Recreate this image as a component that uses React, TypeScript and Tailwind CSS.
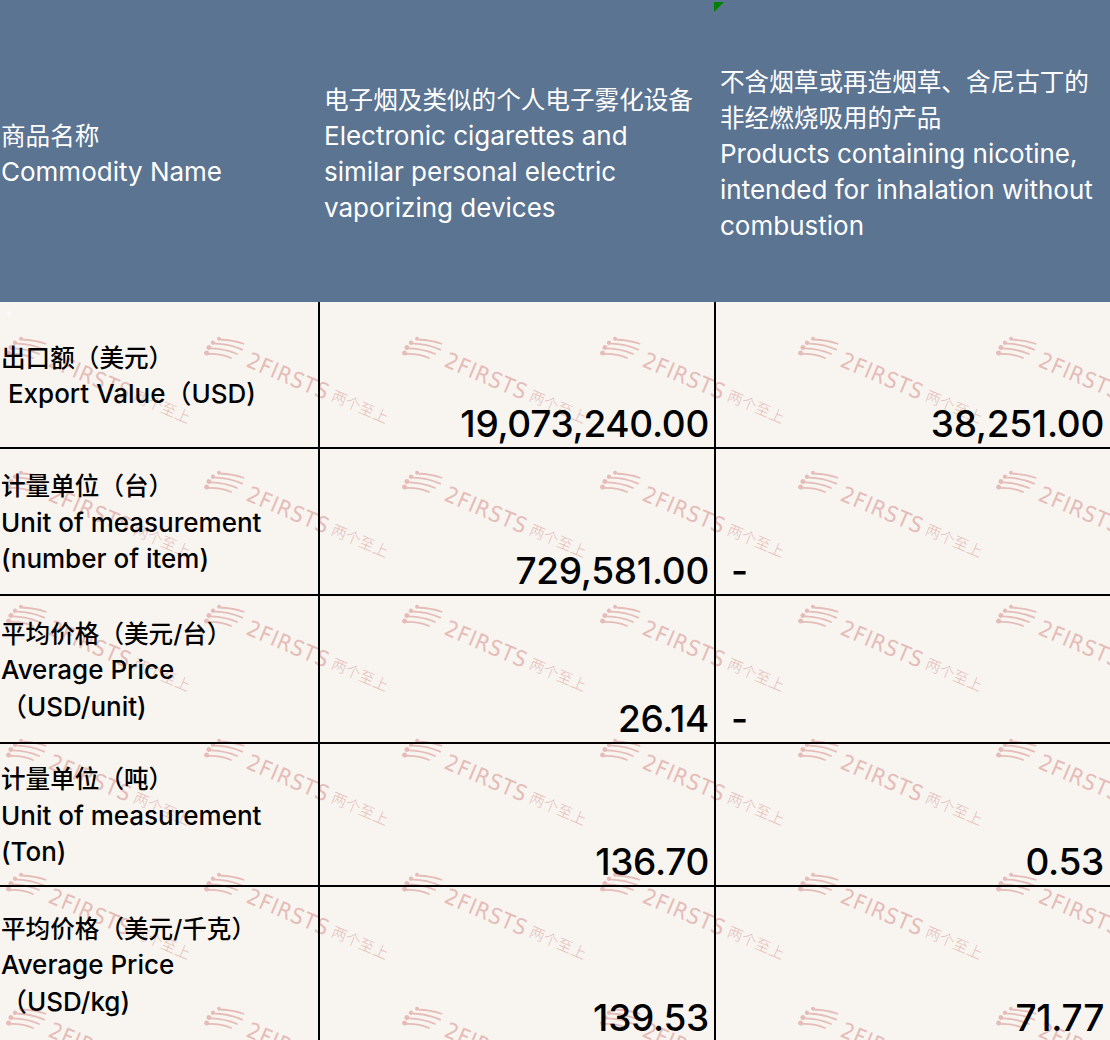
const rows = [
  { label: ["出口额（美元）", " Export Value（USD)"], a: "19,073,240.00", b: "38,251.00", h: "h-[147px]" },
  { label: ["计量单位（台）", "Unit of measurement", "(number of item)"], a: "729,581.00", b: "-", h: "h-[147px]" },
  { label: ["平均价格（美元/台）", "Average Price", "（USD/unit)"], a: "26.14", b: "-", h: "h-[148px]" },
  { label: ["计量单位（吨）", "Unit of measurement", "(Ton)"], a: "136.70", b: "0.53", h: "h-[143px]" },
  { label: ["平均价格（美元/千克）", "Average Price", "（USD/kg)"], a: "139.53", b: "71.77", h: "h-[156px]" },
];

// watermark tiles, page coords of the swoosh
const marks: { x: number; y: number }[] = [];
for (let j = -1; j < 6; j++) {
  for (let i = 0; i < 6; i++) {
    marks.push({ x: 14 + 198 * i, y: 326 + 134 * j });
  }
}

// first line of each label is Chinese, the rest English
function Line({ text, cjk }: { text: string; cjk: boolean }) {
  return <div className={cjk ? "text-[24.6px]" : "text-[26px]"}>{text}</div>;
}

function Swoosh() {
  return (
    <svg width="42" height="30" viewBox="0 0 42 30" fill="none" stroke="#e5bcb8" strokeWidth="1.8" strokeLinecap="round">
      <path d="M8 25 Q19 20 30 20" />
      <path d="M8 19 Q21 14 34 14" />
      <path d="M10 13 Q22 8 37 8" />
      <path d="M14 7 Q24 3 36 2" />
      <circle cx="5.5" cy="25" r="2.4" fill="#e5bcb8" stroke="none" />
      <circle cx="5.5" cy="19" r="2.4" fill="#e5bcb8" stroke="none" />
      <circle cx="7.5" cy="13" r="2.2" fill="#e5bcb8" stroke="none" />
      <circle cx="11.5" cy="7" r="2" fill="#e5bcb8" stroke="none" />
    </svg>
  );
}

function Watermark({ x, y }: { x: number; y: number }) {
  return (
    <div
      className="absolute flex origin-top-left rotate-[23deg] items-center gap-[4px] whitespace-nowrap text-[#e5bcb8]"
      style={{ left: x, top: y - 302 }}
    >
      <Swoosh />
      <span className="font-['DejaVu_Sans_Condensed','DejaVu_Sans',sans-serif] text-[22px] font-light tracking-[1px]">2FIRSTS</span>
      <span className="font-['Noto_Sans_CJK_SC',sans-serif] text-[15px] font-light">两个至上</span>
    </div>
  );
}

export default function App() {
  return (
    <div className="w-[1110px] font-['Inter','Noto_Sans_CJK_SC',sans-serif] text-[24.6px]">
      <div className="relative grid h-[302px] grid-cols-[318px_396px_396px] bg-[#5b7492] leading-[36px] text-white">
        <div className="flex flex-col justify-center pl-[1px] pt-[6px]">
          <Line text="商品名称" cjk />
          <Line text="Commodity Name" cjk={false} />
        </div>
        <div className="flex flex-col justify-center pl-[6px] pt-[6px] whitespace-nowrap">
          <Line text="电子烟及类似的个人电子雾化设备" cjk />
          <Line text="Electronic cigarettes and" cjk={false} />
          <Line text="similar personal electric" cjk={false} />
          <Line text="vaporizing devices" cjk={false} />
        </div>
        <div className="flex flex-col justify-center pl-[6px] pt-[6px] whitespace-nowrap">
          <Line text="不含烟草或再造烟草、含尼古丁的" cjk />
          <Line text="非经燃烧吸用的产品" cjk />
          <Line text="Products containing nicotine," cjk={false} />
          <Line text="intended for inhalation without" cjk={false} />
          <Line text="combustion" cjk={false} />
        </div>
        <svg className="absolute left-[714px] top-[2px]" width="10" height="10" viewBox="0 0 10 10">
          <polygon points="0,0 10,0 0,10" fill="#008000" />
        </svg>
      </div>

      <div className="relative overflow-hidden bg-[#f8f5f1] font-medium text-black">
        <div className="absolute inset-0">
          {marks.map((m) => (
            <Watermark key={`${m.x}-${m.y}`} x={m.x} y={m.y} />
          ))}
        </div>
        <span className="absolute left-[6px] top-[6px] text-[9px] leading-none text-white">+</span>

        {rows.map((row) => (
          <div key={row.a} className={`relative grid grid-cols-[318px_396px_396px] border-b-2 border-black ${row.h}`}>
            <div className="flex flex-col justify-center pl-[1px] pt-[3px] leading-[36.5px] whitespace-pre">
              {row.label.map((t, i) => (
                <Line key={t} text={t} cjk={i === 0} />
              ))}
            </div>
            <div className="flex items-end justify-end border-l-2 border-black pb-[5px] pr-[5px]">
              <span className="text-[37px] leading-none tracking-[-0.3px]">{row.a}</span>
            </div>
            <div
              className={`flex items-end border-l-2 border-black pb-[5px] ${
                row.b === "-" ? "justify-start pl-[15px]" : "justify-end pr-[6px]"
              }`}
            >
              <span className="text-[37px] leading-none tracking-[-0.3px]">{row.b}</span>
            </div>
          </div>
        ))}
      </div>
    </div>
  );
}
